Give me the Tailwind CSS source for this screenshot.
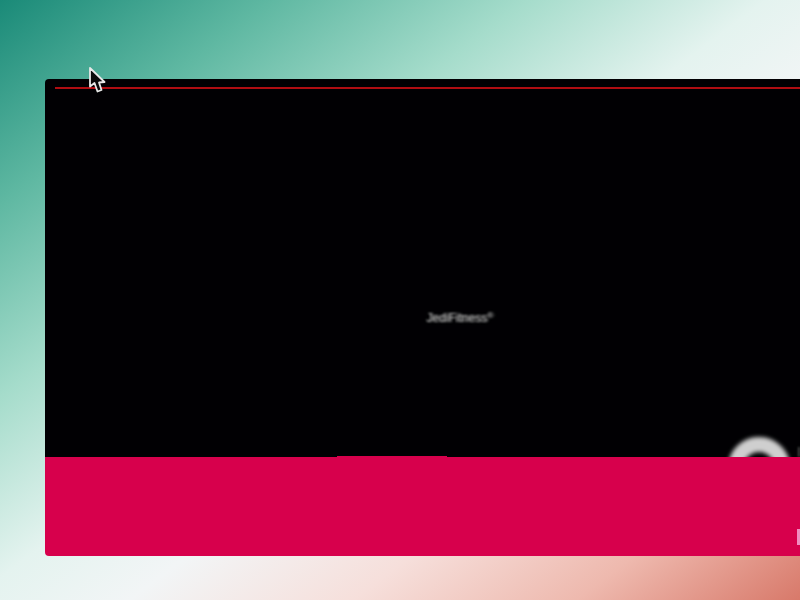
<!DOCTYPE html>
<html lang="en">
<head>
  <meta charset="UTF-8" />
  <title>JediFitness</title>
  <script src="https://cdn.jsdelivr.net/npm/@tailwindcss/browser@4"></script>
</head>
<body class="w-[800px] h-[600px] overflow-hidden relative font-['Liberation_Sans',sans-serif] bg-[linear-gradient(143deg,#1a8a78_0%,#5fb8a2_17%,#a5dccb_33%,#e4f3ef_48%,#f2f5f6_58%,#f6dfdb_72%,#eeb9ae_86%,#d8796a_100%)]">

  <!-- Window -->
  <div class="pt-[79px] pl-[45px]">
    <div class="w-[755px] h-[477px] rounded-l-[4px] overflow-hidden flex flex-col">
      <!-- Video area -->
      <section class="relative h-[378px] bg-[#010003] pt-[8px] pl-[10px] overflow-hidden">
        <div class="h-[2px] bg-[#b00d12]"></div>
        <p class="absolute left-[381px] top-[232px] text-[12px] leading-[14px] text-[#a8a8a8] blur-[0.8px] [text-shadow:2px_0_1px_#777]">JediFitness<sup class="text-[8px]">®</sup></p>
        <div class="absolute left-[683px] top-[358px] w-[62px] h-[62px] rounded-full border-[15px] border-[#cfcfcf] blur-[2px]"></div>
        <div class="absolute left-[753px] top-[368px] w-[2px] h-[10px] bg-[#444444] blur-[1px]"></div>
      </section>
      <!-- Pink band -->
      <section class="relative h-[99px] bg-[#d7004c]">
        <div class="absolute left-[292px] top-[-1px] w-[110px] h-[1px] bg-[#d7004c]"></div>
        <div class="absolute left-[752px] top-[72px] w-[3px] h-[16px] bg-[#f08cc0] blur-[0.5px]"></div>
      </section>
    </div>
  </div>

  <!-- Cursor -->
  <svg class="absolute left-[86px] top-[65px]" width="22" height="30" viewBox="0 0 22 30">
    <path d="M4 3 L4 21.5 L8.5 18 L11.5 26.5 L15.5 25 L13 17.5 L18.5 17 Z" fill="#0a0a0a" stroke="#e8e8e8" stroke-width="1.8" stroke-linejoin="round" />
  </svg>
</body>
</html>
